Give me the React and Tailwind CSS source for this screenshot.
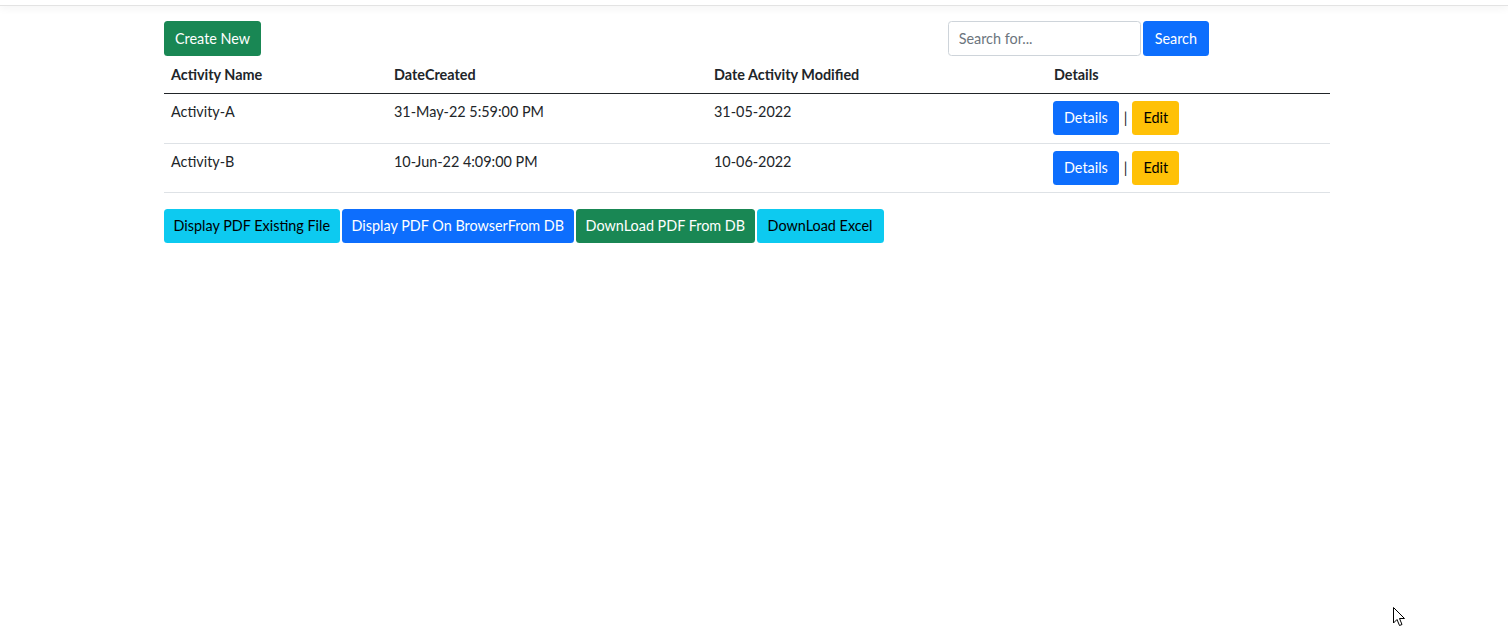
export default function App() {
  const font = { fontFamily: '"Lato", "Noto Sans", sans-serif' };
  const base = "h-[34px] rounded-[3.5px] text-[14.4px] leading-[21.6px] flex items-center";
  const btn = `${base} px-[11px]`;
  const rows = [
    { name: "Activity-A", created: "31-May-22 5:59:00 PM", modified: "31-05-2022", h: "h-[50px]" },
    { name: "Activity-B", created: "10-Jun-22 4:09:00 PM", modified: "10-06-2022", h: "h-[49px]" },
  ];
  return (
    <div className="w-[1508px] h-[642px] bg-white text-[#212529] overflow-hidden relative" style={font}>
      <div className="h-[6px] border-b border-[#e3e3e3] shadow-[0_2px_8px_rgba(0,0,0,0.06)]" />
      <div className="w-[1166px] ml-[164px] mt-[15px]">
        <div className="flex items-start">
          <button className={`${base} px-[11px] h-[35px] bg-[#198754] text-white`}>Create New</button>
          <div className="ml-auto mr-[121px] flex gap-[2px]">
            <input
              placeholder="Search for..."
              className="w-[193px] h-[35px] border border-[#ced4da] rounded-[3.5px] px-[10px] text-[14.4px] placeholder:text-[#6c757d] outline-none"
              style={font}
            />
            <button className={`${base} h-[35px] px-[12px] bg-[#0d6efd] text-white`}>Search</button>
          </div>
        </div>
        <div className="grid grid-cols-[223px_320px_340px_1fr] text-[14.4px] leading-[21.6px] border-b border-[#212529] pt-[8px] pb-[7px]">
          <div className="px-[7px] font-bold">Activity Name</div>
          <div className="px-[7px] font-bold">DateCreated</div>
          <div className="px-[7px] font-bold">Date Activity Modified</div>
          <div className="px-[7px] font-bold">Details</div>
        </div>
        {rows.map((r) => (
          <div
            key={r.name}
            className={`grid grid-cols-[223px_320px_340px_1fr] text-[14.4px] leading-[21.6px] border-b border-[#dee2e6] ${r.h} pt-[7px]`}
          >
            <div className="px-[7px]">{r.name}</div>
            <div className="px-[7px]">{r.created}</div>
            <div className="px-[7px]">{r.modified}</div>
            <div className="px-[6px] flex items-center h-[34px] gap-[5px]">
              <button className={`${btn} bg-[#0d6efd] text-white`}>Details</button>
              <span className="text-[#212529]">|</span>
              <button className={`${btn} bg-[#ffc107] text-black`}>Edit</button>
            </div>
          </div>
        ))}
        <div className="flex gap-[2px] mt-[16px]">
          <button className={`${base} px-[9.5px] bg-[#0dcaf0] text-black`}>Display PDF Existing File</button>
          <button className={`${base} px-[10px] bg-[#0d6efd] text-white`}>Display PDF On BrowserFrom DB</button>
          <button className={`${base} px-[9.5px] bg-[#198754] text-white`}>DownLoad PDF From DB</button>
          <button className={`${base} px-[11px] bg-[#0dcaf0] text-black`}>DownLoad Excel</button>
        </div>
      </div>
      <svg className="absolute left-[1393px] top-[607px]" width="13" height="20" viewBox="0 0 13 20">
        <path d="M0.5 0.5 L0.5 16 L4 12.5 L6.5 18.5 L9 17.5 L6.5 11.5 L11.5 11.5 Z" fill="white" stroke="black" strokeWidth="1" />
      </svg>
    </div>
  );
}
